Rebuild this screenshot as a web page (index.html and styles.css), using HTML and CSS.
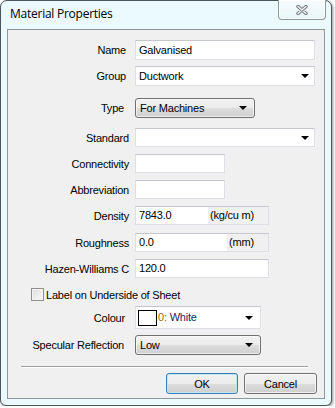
FILE: index.html
```html
<!DOCTYPE html>
<html lang="en">

<head>
    <meta charset="UTF-8">
    <title>Material Properties</title>
    <link rel="stylesheet" href="styles.css">
</head>

<body>
    <div class="window">
        <div class="titlebar">
            <span class="title">Material Properties</span>
            <div class="close">
                <svg width="12" height="10" viewBox="0 0 12 10">
                    <path d="M2 1.5 L10 8.5 M10 1.5 L2 8.5" stroke="#6b737a" stroke-width="3.4" stroke-linecap="round" />
                    <path d="M2 1.5 L10 8.5 M10 1.5 L2 8.5" stroke="#f4f6f8" stroke-width="1.6" stroke-linecap="round" />
                </svg>
            </div>
        </div>
        <div class="client">
            <div class="row r-name">
                <label class="lbl lbl-a">Name</label>
                <div class="edit wide">Galvanised</div>
            </div>
            <div class="row r-group">
                <label class="lbl lbl-a">Group</label>
                <div class="edit wide drop">Ductwork<span class="arrow"></span></div>
            </div>
            <div class="row r-type">
                <label class="lbl lbl-b">Type</label>
                <div class="combo type">For Machines<span class="arrow"></span></div>
            </div>
            <div class="row r-std">
                <label class="lbl">Standard</label>
                <div class="edit wide drop"><span class="arrow"></span></div>
            </div>
            <div class="row r-gap">
                <label class="lbl">Connectivity</label>
                <div class="edit short"></div>
            </div>
            <div class="row r-gap">
                <label class="lbl">Abbreviation</label>
                <div class="edit short"></div>
            </div>
            <div class="row r-gap">
                <label class="lbl">Density</label>
                <div class="edit mid">7843.0<span class="unit u-dens">(kg/cu m)</span></div>
            </div>
            <div class="row r-rough">
                <label class="lbl">Roughness</label>
                <div class="edit mid">0.0<span class="unit u-mm">(mm)</span></div>
            </div>
            <div class="row r-hazen">
                <label class="lbl">Hazen-Williams C</label>
                <div class="edit mid">120.0</div>
            </div>
            <div class="row r-check">
                <span class="checkbox"></span>
                <label>Label on Underside of Sheet</label>
            </div>
            <div class="row r-colour">
                <label class="lbl lbl-c">Colour</label>
                <div class="edit colour"><span class="swatch"></span><span class="num">0:</span>&nbsp;<span class="cname">White</span><span class="arrow"></span></div>
            </div>
            <div class="row r-spec">
                <label class="lbl lbl-b">Specular Reflection</label>
                <div class="combo spec">Low<span class="arrow"></span></div>
            </div>
            <div class="sep"></div>
            <div class="buttons">
                <button class="btn default">OK</button>
                <button class="btn">Cancel</button>
            </div>
        </div>
    </div>
</body>

</html>
```

FILE: styles.css
```css
* {
    margin: 0;
    padding: 0;
    box-sizing: border-box;
}

body {
    background: #ffffff;
    font-family: "Liberation Sans", Arial, sans-serif;
    font-size: 11px;
    letter-spacing: -0.2px;
    color: #000;
}

.window {
    width: 332px;
    height: 406px;
    border: 1px solid #4a555c;
    border-radius: 7px 7px 6px 6px;
    background: #eafafd;
    padding: 0 6px 6px 6px;
    display: flex;
    flex-direction: column;
    box-shadow: 1px 1px 3px rgba(0, 0, 0, .45);
}

.titlebar {
    height: 28px;
    position: relative;
    flex: none;
}

.title {
    display: block;
    padding: 4px 0 0 3px;
    font-family: "Open Sans", "Noto Sans", sans-serif;
    font-size: 12px;
    letter-spacing: -0.25px;
    color: #000;
}

.close {
    position: absolute;
    top: -1px;
    right: -1px;
    width: 48px;
    height: 20px;
    border: 1px solid #8d989f;
    border-top: none;
    border-radius: 0 0 4px 4px;
    background: linear-gradient(#f6fcfe, #e9f6fa);
    box-shadow: inset 0 0 0 1px rgba(255, 255, 255, .8);
    display: flex;
    align-items: center;
    justify-content: center;
    padding-top: 1px;
}

.client {
    flex: 1;
    border: 1px solid #8e979d;
    background: #f0f0f0;
    display: flex;
    flex-direction: column;
    padding-top: 10px;
}

.row {
    display: flex;
    align-items: center;
    flex: none;
}

.lbl {
    width: 127px;
    text-align: right;
    padding-right: 6px;
    white-space: nowrap;
}

.lbl-a {
    padding-right: 9px;
}

.lbl-b {
    padding-right: 11px;
}

.lbl-c {
    padding-right: 10px;
}

.edit {
    height: 19px;
    background: #fff;
    border: 1px solid #dcdfe4;
    border-top-color: #c4c8ce;
    padding: 0 3px;
    line-height: 17px;
    position: relative;
    white-space: nowrap;
}

.wide {
    width: 180px;
}

.short {
    width: 90px;
}

.mid {
    width: 134px;
}

.r-name .edit,
.r-group .edit {
    height: 20px;
    line-height: 18px;
}

.r-group {
    margin-top: 6px;
}

.r-type {
    margin-top: 12px;
}

.r-std {
    margin-top: 10px;
}

.r-gap {
    margin-top: 7px;
}

.r-rough {
    margin-top: 8px;
}

.r-hazen {
    margin-top: 7px;
}

.r-check {
    margin-top: 10px;
    padding-left: 23px;
    height: 13px;
}

.r-colour {
    margin-top: 5px;
}

.r-spec {
    margin-top: 6px;
}

.arrow {
    position: absolute;
    right: 5px;
    top: 50%;
    margin-top: -2px;
    width: 0;
    height: 0;
    border-left: 4px solid transparent;
    border-right: 4px solid transparent;
    border-top: 4px solid #000;
}

.combo {
    height: 20px;
    border: 1px solid #707070;
    border-radius: 3px;
    background: linear-gradient(#f2f2f2 0%, #ebebeb 50%, #dddddd 51%, #cfcfcf 100%);
    box-shadow: inset 0 0 0 1px rgba(255, 255, 255, .6);
    padding: 0 4px;
    line-height: 18px;
    position: relative;
}

.combo .arrow {
    right: 7px;
}

.type {
    width: 120px;
}

.spec {
    width: 126px;
}

.unit {
    position: absolute;
    top: 0;
    bottom: 0;
    right: 0;
    background: #f0f0f0;
    padding-left: 2px;
}

.u-dens {
    width: 60px;
}

.u-mm {
    width: 41px;
}

.checkbox {
    width: 13px;
    height: 13px;
    border: 1px solid #8f8f8f;
    background: linear-gradient(135deg, #dcdcdc, #fbfbfb);
    box-shadow: inset 0 0 0 1px #f4f4f4;
    margin-right: 2px;
}

.colour {
    width: 126px;
    height: 23px;
    line-height: 21px;
    display: flex;
    align-items: center;
    padding-left: 2px;
}

.swatch {
    width: 19px;
    height: 16px;
    border: 1px solid #000;
    background: #fff;
    margin-right: 1px;
}

.num {
    color: #a8650d;
}

.cname {
    color: #1f1f5c;
}

.colour .arrow {
    right: 7px;
}

.sep {
    margin: 11px 16px 0 13px;
    height: 2px;
    border-top: 1px solid #a0a0a0;
    border-bottom: 1px solid #ffffff;
    flex: none;
}

.buttons {
    display: flex;
    justify-content: flex-end;
    gap: 6px;
    padding-right: 7px;
    margin-top: 5px;
}

.btn {
    font-family: "Liberation Sans", Arial, sans-serif;
    font-size: 11px;
    letter-spacing: -0.2px;
    color: #000;
    width: 73px;
    height: 21px;
    border: 1px solid #707070;
    border-radius: 3px;
    background: linear-gradient(#f2f2f2 0%, #ebebeb 50%, #dddddd 51%, #cfcfcf 100%);
    box-shadow: inset 0 0 0 1px rgba(255, 255, 255, .7);
}

.btn.default {
    width: 72px;
    border-color: #3c7fb1;
    box-shadow: inset 0 0 0 1px #bfe6f8;
}
```
